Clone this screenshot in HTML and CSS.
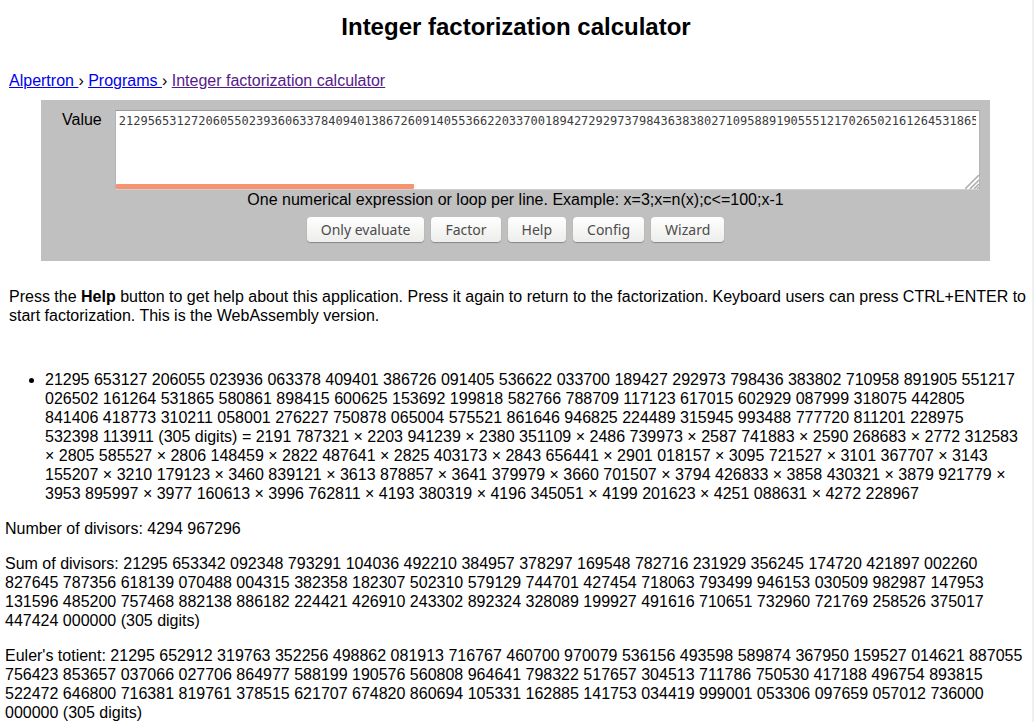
FILE: index.html
```html
<!DOCTYPE html>
<html lang="en">
<head>
<meta charset="utf-8">
<title>Integer factorization calculator</title>
<link rel="stylesheet" href="styles.css">
</head>
<body>
<main class="page">
  <h1 class="title">Integer factorization calculator</h1>
  <div class="intro">
    <nav class="crumbs"><a class="link" href="#home">Alpertron&nbsp;</a>› <a class="link" href="#programs">Programs&nbsp;</a>› <a class="link link-visited" href="#ecm">Integer factorization calculator</a></nav>
    <form class="panel">
      <div class="field">
        <label class="field-label" for="value">Value</label>
        <div class="editor">
          <textarea class="editor-input" id="value" wrap="off" spellcheck="false">21295653127206055023936063378409401386726091405536622033700189427292973798436383802710958891905551217026502161264531865580861898415600625153692199818582766788709117123617015602929087999318075442805841406418773310211058001276227750878065004575521861646946825224489315945993488777720811201228975532398113911</textarea>
          <span class="editor-scroll"></span>
          <svg class="editor-grip" width="14" height="14" viewBox="0 0 14 14" aria-hidden="true"><path d="M0 14 14 0M5 14 14 5M9 14 14 9M12 14 14 12"/></svg>
        </div>
      </div>
      <p class="hint">One numerical expression or loop per line. Example: x=3;x=n(x);c&lt;=100;x-1</p>
      <div class="buttons">
        <button class="button" type="button">Only evaluate</button>
        <button class="button" type="button">Factor</button>
        <button class="button" type="button">Help</button>
        <button class="button" type="button">Config</button>
        <button class="button" type="button">Wizard</button>
      </div>
    </form>
    <p class="help">Press the <b>Help</b> button to get help about this application. Press it again to return to the factorization. Keyboard users can press CTRL+ENTER to start factorization. This is the WebAssembly version.</p>
  </div>
  <section class="results">
    <ul class="factors">
      <li>21295 653127 206055 023936 063378 409401 386726 091405 536622 033700 189427 292973 798436 383802 710958 891905 551217 026502 161264 531865 580861 898415 600625 153692 199818 582766 788709 117123 617015 602929 087999 318075 442805 841406 418773 310211 058001 276227 750878 065004 575521 861646 946825 224489 315945 993488 777720 811201 228975 532398 113911 (305 digits) = 2191 787321 × 2203 941239 × 2380 351109 × 2486 739973 × 2587 741883 × 2590 268683 × 2772 312583 × 2805 585527 × 2806 148459 × 2822 487641 × 2825 403173 × 2843 656441 × 2901 018157 × 3095 721527 × 3101 367707 × 3143 155207 × 3210 179123 × 3460 839121 × 3613 878857 × 3641 379979 × 3660 701507 × 3794 426833 × 3858 430321 × 3879 921779 × 3953 895997 × 3977 160613 × 3996 762811 × 4193 380319 × 4196 345051 × 4199 201623 × 4251 088631 × 4272 228967</li>
    </ul>
    <p class="result">Number of divisors: 4294 967296</p>
    <p class="result">Sum of divisors: 21295 653342 092348 793291 104036 492210 384957 378297 169548 782716 231929 356245 174720 421897 002260 827645 787356 618139 070488 004315 382358 182307 502310 579129 744701 427454 718063 793499 946153 030509 982987 147953 131596 485200 757468 882138 886182 224421 426910 243302 892324 328089 199927 491616 710651 732960 721769 258526 375017 447424 000000 (305 digits)</p>
    <p class="result">Euler's totient: 21295 652912 319763 352256 498862 081913 716767 460700 970079 536156 493598 589874 367950 159527 014621 887055 756423 853657 037066 027706 864977 588199 190576 560808 964641 798322 517657 304513 711786 750530 417188 496754 893815 522472 646800 716381 819761 378515 621707 674820 860694 105331 162885 141753 034419 999001 053306 097659 057012 736000 000000 (305 digits)</p>
  </section>
</main>
</body>
</html>
```
FILE: styles.css
```css
html {
  background: #fff;
  border-right: 2px solid #f0f0f0;
}

body {
  margin: 0;
  color: #000;
  font: 16px/19px "Liberation Sans", Arial, sans-serif;
}

.page {
  padding: 13px 5px 0;
}

.title {
  margin: 0;
  font-size: 24px;
  line-height: 28px;
  text-align: center;
}

.intro {
  padding-left: 4px;
}

.crumbs {
  padding: 30px 0 10px;
}

.link {
  color: #00e;
}

.link-visited {
  color: #551a8b;
}

.panel {
  margin: 0 37px 0 32px;
  padding: 10px 10px 19px 21px;
  background: #c0c0c0;
}

.field {
  display: flex;
  gap: 13px;
}

.editor {
  position: relative;
  flex: 1;
  min-width: 0;
  height: 78px;
  border: 1px solid #b4b4b4;
  border-top-color: #999;
  border-bottom-color: #d0d0d0;
  background: #fff;
}

.editor-input {
  display: block;
  box-sizing: border-box;
  width: calc(100% - 6px);
  height: 100%;
  margin: 0 3px;
  padding: 3px 0;
  border: 0;
  outline: 0;
  resize: none;
  overflow: hidden;
  background: transparent;
  color: #3c3c3c;
  font: 12px/15px "DejaVu Sans Mono", monospace;
  white-space: pre;
}

.editor-scroll {
  position: absolute;
  bottom: 0;
  left: 0;
  width: 298px;
  height: 5px;
  border-radius: 1px;
  background: #f69370;
}

.editor-grip {
  position: absolute;
  right: 0;
  bottom: 0;
  fill: none;
  stroke: #aaa;
  stroke-width: 1.5;
}

.hint {
  margin: 0;
  padding-right: 11px;
  text-align: center;
}

.buttons {
  display: flex;
  justify-content: center;
  gap: 7px;
  margin: 8px 11px 0 0;
}

.button {
  height: 25px;
  padding: 0 14px;
  border: 0;
  border-radius: 4px;
  background: linear-gradient(#fff, #ededeb);
  box-shadow: 0 1px 1px #888;
  color: #4c4c4c;
  font: 14px/25px "Noto Sans", sans-serif;
}

.help {
  margin: 26px 0 0;
}

.results {
  padding-top: 45px;
}

.factors {
  margin: 0;
  padding: 0 6px 0 40px;
}

.result {
  margin: 16px 0 0;
}
```
